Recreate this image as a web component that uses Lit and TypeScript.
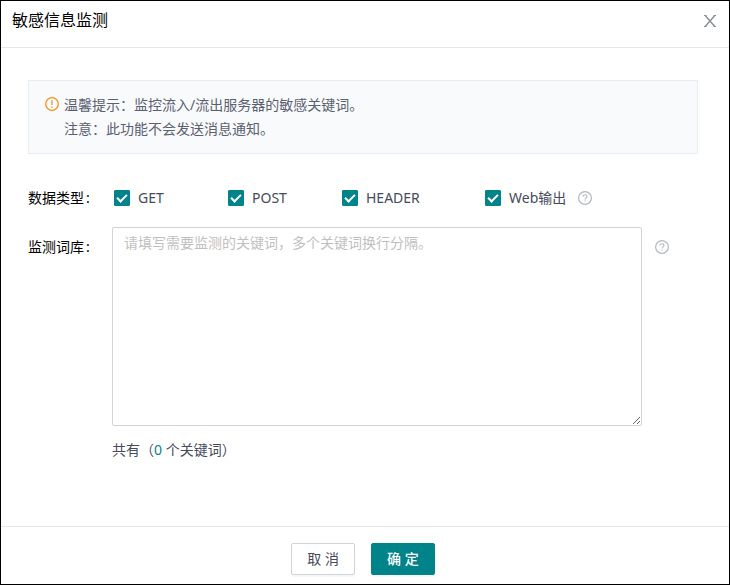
import { LitElement, html, css } from "lit";
import { customElement, property, state } from "lit/decorators.js";

@customElement("help-tip")
class HelpTip extends LitElement {
  static styles = css`
    :host {
      display: inline-flex;
    }

    button {
      display: inline-flex;
      padding: 0;
      border: 0;
      background: none;
      color: #b3b7bf;
      cursor: help;
    }
  `;

  @property() label = "";

  render() {
    return html`
      <button type="button" aria-label=${this.label}>
        <svg width="14" height="14" viewBox="0 0 14 14" fill="none" stroke="currentColor">
          <circle cx="7" cy="7" r="6.4" stroke-width="1.2" />
          <path d="M5 5.6C5 4.3 5.9 3.7 7 3.7s2 .7 2 1.8c0 1.4-2 1.4-2 2.9" stroke-width="1.1" />
          <path d="M7 9.5v1.1" stroke-width="1.2" />
        </svg>
      </button>
    `;
  }
}

@customElement("app-root")
class AppRoot extends LitElement {
  static styles = css`
    :host {
      display: flex;
      flex-direction: column;
      box-sizing: border-box;
      min-height: 100vh;
      border: 1px solid #000;
      background: #fff;
      color: #454b5a;
      font-family: "Noto Sans", "Noto Sans CJK SC", sans-serif;
      font-size: 14px;
      line-height: 24px;
    }

    header {
      display: flex;
      align-items: center;
      justify-content: space-between;
      padding: 8px 12px 15px 11px;
      border-bottom: 1px solid #e6e6e6;
    }

    h1 {
      margin: 0;
      color: #000;
      font-size: 16px;
      font-weight: 400;
      line-height: 23px;
    }

    .close {
      display: flex;
      padding: 0;
      border: 0;
      background: none;
      color: #868e96;
      cursor: pointer;
    }

    main {
      flex: 1;
      padding: 32px 31px 32px 27px;
    }

    .notice {
      display: flex;
      gap: 5px;
      padding: 12px 16px;
      border: 1px solid #e9edf1;
      background: #f9fafc;
      color: #5a6070;
    }

    .notice svg {
      flex: none;
      margin-top: 4px;
      color: #f7931e;
    }

    .notice p {
      margin: 0;
    }

    .row {
      display: grid;
      grid-template-columns: 84px 1fr;
    }

    .types {
      margin-top: 28px;
      line-height: 32px;
    }

    .words {
      margin-top: 13px;
    }

    .label {
      color: #000;
    }

    .label::after {
      content: ":";
      margin-left: 2px;
    }

    .words .label {
      line-height: 40px;
    }

    .checks {
      display: grid;
      grid-template-columns: 114px 114px 143px auto;
      padding-left: 2px;
    }

    .check {
      display: flex;
      align-items: center;
      gap: 12px;
    }

    .check label {
      display: flex;
      align-items: center;
      gap: 8px;
      cursor: pointer;
    }

    input {
      display: grid;
      place-content: center;
      appearance: none;
      box-sizing: border-box;
      width: 16px;
      height: 16px;
      margin: 0;
      border: 1px solid #d0d3d9;
      border-radius: 1px;
      cursor: pointer;
    }

    input:checked {
      border-color: #008489;
      background: #008489;
    }

    input:checked::after {
      content: "";
      width: 4px;
      height: 8px;
      margin-bottom: 2px;
      border: solid #fff;
      border-width: 0 2px 2px 0;
      transform: rotate(45deg);
    }

    .field {
      display: flex;
      align-items: flex-start;
      gap: 13px;
      padding-right: 29px;
    }

    .field help-tip {
      margin-top: 13px;
    }

    textarea {
      flex: 1;
      box-sizing: border-box;
      min-width: 0;
      height: 199px;
      margin: 0;
      padding: 4px 11px;
      border: 1px solid #d0d3d9;
      border-radius: 2px;
      outline: none;
      color: inherit;
      font: inherit;
      line-height: 22px;
      resize: vertical;
    }

    textarea::placeholder {
      color: #bfbfbf;
    }

    .count {
      margin: 12px 0 0;
    }

    .count span {
      color: #008489;
    }

    footer {
      display: flex;
      justify-content: center;
      gap: 16px;
      padding: 16px 20px 9px 16px;
      border-top: 1px solid #e6e6e6;
    }

    .btn {
      height: 32px;
      padding: 0 15px;
      border: 1px solid #d0d3d9;
      border-radius: 2px;
      background: #fff;
      box-shadow: 0 2px 0 rgba(0, 0, 0, 0.03);
      color: #454b5a;
      font: inherit;
      cursor: pointer;
    }

    .btn.primary {
      border-color: #008489;
      background: #008489;
      color: #fff;
      font-weight: 500;
    }
  `;

  @property({ type: Array }) types = [
    { id: "get", name: "GET" },
    { id: "post", name: "POST" },
    { id: "header", name: "HEADER" },
    { id: "web", name: "Web输出", help: true },
  ];

  @state() private words = "";

  private get count() {
    return this.words.split("\n").filter((w) => w.trim()).length;
  }

  private onInput(e: Event) {
    this.words = (e.target as HTMLTextAreaElement).value;
  }

  render() {
    return html`
      <header>
        <h1>敏感信息监测</h1>
        <button class="close" type="button" aria-label="关闭">
          <svg width="14" height="14" viewBox="0 0 14 14" fill="none" stroke="currentColor" stroke-width="1.4">
            <path d="M2.2 1.5 11.8 12.5M11.8 1.5 2.2 12.5" />
            <path d="M1 1.5h2.4M10.6 1.5H13M1 12.5h2.4M10.6 12.5H13" stroke-width="1" />
          </svg>
        </button>
      </header>

      <main>
        <div class="notice">
          <svg width="14" height="14" viewBox="0 0 14 14" fill="none" stroke="currentColor" stroke-width="1.3">
            <circle cx="7" cy="7" r="6.3" />
            <path d="M7 3.2v4.9M7 9.4v1.4" />
          </svg>
          <div>
            <p>温馨提示：监控流入/流出服务器的敏感关键词。</p>
            <p>注意：此功能不会发送消息通知。</p>
          </div>
        </div>

        <div class="row types" role="group" aria-labelledby="types-label">
          <span class="label" id="types-label">数据类型</span>
          <div class="checks">
            ${this.types.map(
              (t) => html`
                <div class="check">
                  <label for=${t.id}><input type="checkbox" id=${t.id} checked />${t.name}</label>
                  ${t.help ? html`<help-tip label="帮助"></help-tip>` : ""}
                </div>
              `
            )}
          </div>
        </div>

        <div class="row words">
          <label class="label" for="words">监测词库</label>
          <div>
            <div class="field">
              <textarea
                id="words"
                placeholder="请填写需要监测的关键词，多个关键词换行分隔。"
                .value=${this.words}
                @input=${this.onInput}
              ></textarea>
              <help-tip label="帮助"></help-tip>
            </div>
            <p class="count">共有（<span>${this.count}</span> 个关键词）</p>
          </div>
        </div>
      </main>

      <footer>
        <button class="btn" type="button">取 消</button>
        <button class="btn primary" type="button">确 定</button>
      </footer>
    `;
  }
}
